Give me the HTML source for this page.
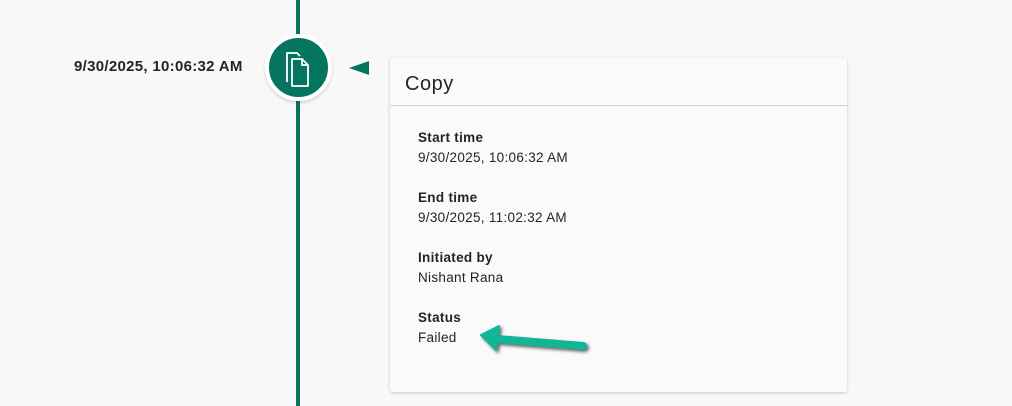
<!DOCTYPE html>
<html><head><style>
body{margin:0;width:1012px;height:406px;background:#f8f8f8;font-family:"Liberation Sans",sans-serif;position:relative;overflow:hidden;color:#242424}
.line{position:absolute;left:296px;top:0;width:4px;height:406px;background:#057560}
.circ{position:absolute;left:265px;top:34px;width:67px;height:67px;border-radius:50%;background:#057560;border:4px solid #fff;box-sizing:border-box;box-shadow:0 2px 3px rgba(0,0,0,.15)}
.date{position:absolute;left:74px;top:58px;font-size:15px;font-weight:bold;letter-spacing:0.3px}
.tri{position:absolute;left:349px;top:61px;width:0;height:0;border-top:7px solid transparent;border-bottom:7px solid transparent;border-right:20px solid #057560}
.card{position:absolute;left:390px;top:58px;width:457px;height:334px;background:#fafafa;border-radius:3px;box-shadow:0 1px 3px rgba(0,0,0,.2)}
.hd{height:48px;border-bottom:1px solid #d0d0d0;font-size:20px;padding:15px 0 0 15px;box-sizing:border-box;letter-spacing:0.5px}
.f{position:absolute;left:28px;font-size:13.5px;line-height:20px;letter-spacing:0.3px}
.f b{display:block}
</style></head><body>
<div class="line"></div>
<div class="circ"><svg width="59" height="59" viewBox="0 0 59 59" style="position:absolute;left:0;top:0"><g fill="none" stroke="#fff" stroke-width="1.8" stroke-linejoin="round"><path d="M18 44V15h10l3 3"/><path d="M23 48V21h10l6 6v21z"/><path d="M33 21v6h6"/></g></svg></div>
<div class="date">9/30/2025, 10:06:32 AM</div>
<div class="tri"></div>
<div class="card">
<div class="hd">Copy</div>
<div class="f" style="top:70px"><b>Start time</b>9/30/2025, 10:06:32 AM</div>
<div class="f" style="top:130px"><b>End time</b>9/30/2025, 11:02:32 AM</div>
<div class="f" style="top:190px"><b>Initiated by</b>Nishant Rana</div>
<div class="f" style="top:250px"><b>Status</b>Failed</div>
</div>
<svg width="1012" height="406" style="position:absolute;left:0;top:0">
<g style="filter:drop-shadow(2px 2px 1.5px rgba(0,0,0,.6))">
<path d="M583 346L497 339" stroke="#12b597" stroke-width="8" stroke-linecap="round"/>
<path d="M481 335L499 326L496 350Z" fill="#12b597" stroke="#12b597" stroke-width="2" stroke-linejoin="round"/>
</g></svg>
</body></html>
